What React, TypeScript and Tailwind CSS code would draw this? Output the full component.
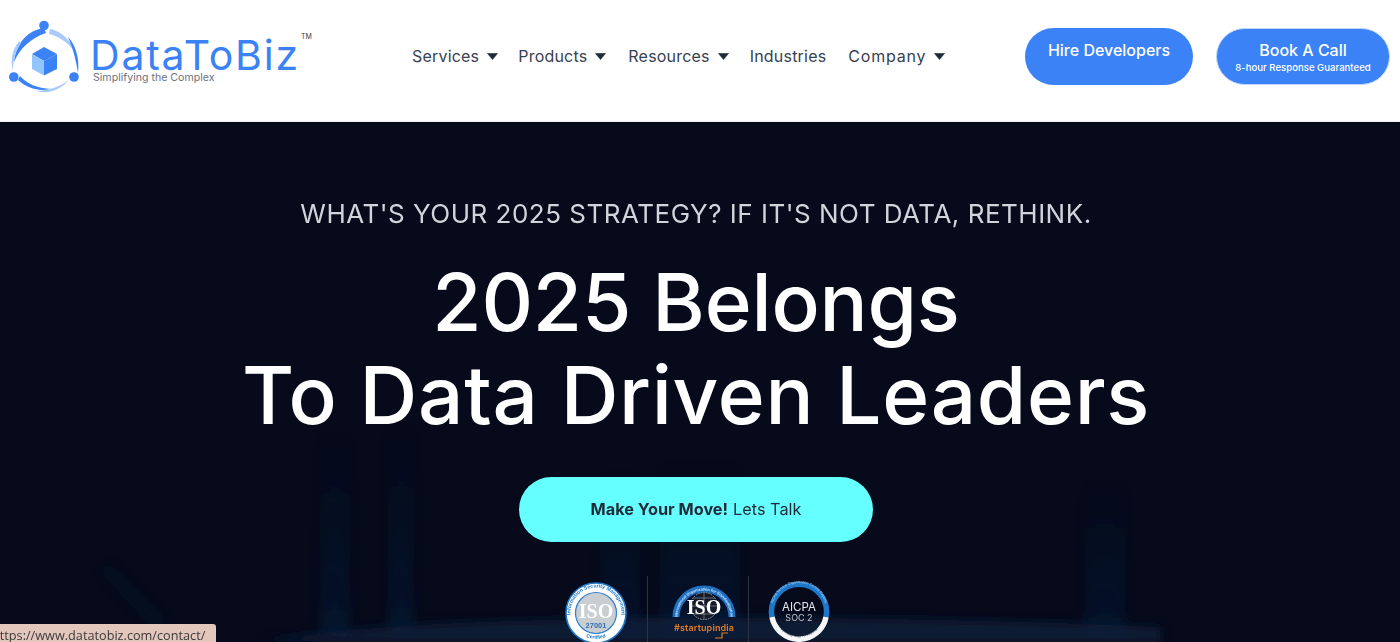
const navItems = [
  { label: "Services", caret: true, cls: "mr-[20px]" },
  { label: "Products", caret: true, cls: "mr-[22px]" },
  { label: "Resources", caret: true, cls: "mr-[21px]" },
  { label: "Industries", caret: false, cls: "mr-[22px]" },
  { label: "Company", caret: true, cls: "tracking-[0.8px]" },
];

function Caret() {
  return (
    <svg width="11" height="7" viewBox="0 0 11 7" className="ml-[8px]">
      <path d="M0.5 0.5 H10.5 L5.5 6.5 Z" fill="#1f2937" stroke="#1f2937" strokeWidth="0.6" strokeLinejoin="round" />
    </svg>
  );
}

function LogoMark() {
  return (
    <svg width="72" height="76" viewBox="0 0 72 76" className="shrink-0">
      <path d="M35 8 C20 10 7 22 5 42 C11 28 22 18 37 13 Z" fill="#3b82f6" />
      <path d="M10 21 C3 30 1 40 4 51 C4 42 6 32 12 23 Z" fill="#a9cbfb" />
      <path d="M41 9 C52 11 62 20 67 33 C60 24 52 17 40 14 Z" fill="#a9cbfb" />
      <path d="M59 17 C66 24 71 38 69 53 C67 40 64 28 59 17 Z" fill="#3b82f6" />
      <path d="M11 56 C18 64 28 68 42 69 C30 72 18 68 9 60 Z" fill="#3b82f6" />
      <path d="M27 71 C40 75 52 69 60 60 C53 65 44 70 27 71 Z" fill="#a9cbfb" />
      <circle cx="35" cy="5.5" r="4.8" fill="#3b82f6" />
      <circle cx="4.8" cy="57" r="4.8" fill="#3b82f6" />
      <circle cx="65" cy="57" r="4.8" fill="#3b82f6" />
      <path d="M35 27 L48 34 L35 41 L23 34 Z" fill="#3b82f6" />
      <path d="M48 34 V49 L35 55.5 V41 Z" fill="#3b82f6" />
      <path d="M23 34 V49 L35 55.5 V41 Z" fill="#93c5fd" />
    </svg>
  );
}

function IsoBadge() {
  return (
    <svg width="62" height="62" viewBox="0 0 62 62">
      <defs>
        <path id="isoTop" d="M8 42 A25.5 25.5 0 1 1 54 42" />
        <path id="isoBottom" d="M6 38 A26 26 0 0 0 56 38" />
      </defs>
      <circle cx="31" cy="31" r="30" fill="#fff" stroke="#1d78c9" strokeWidth="1.6" />
      <circle cx="31" cy="31" r="20.5" fill="#c9ced3" stroke="#2f7fc9" strokeWidth="1.2" />
      <text fontSize="5.2" fontWeight="700" fill="#1d78c9" fontFamily="'Liberation Sans', sans-serif" textAnchor="middle">
        <textPath href="#isoTop" startOffset="50%">Information Security Management</textPath>
      </text>
      <text fontSize="5" fontWeight="700" fill="#1d78c9" fontFamily="'Liberation Sans', sans-serif" textAnchor="middle">
        <textPath href="#isoBottom" startOffset="50%">Certified</textPath>
      </text>
      <text x="31" y="36" fontSize="20" fontWeight="700" fill="#fff" textAnchor="middle" fontFamily="'Liberation Serif', serif">ISO</text>
      <text x="31" y="46" fontSize="7.5" fontWeight="700" fill="#2f6fb5" textAnchor="middle" fontFamily="'Liberation Sans', sans-serif">27001</text>
    </svg>
  );
}

function StartupBadge() {
  return (
    <svg width="66" height="60" viewBox="0 0 66 60">
      <defs>
        <path id="startArc" d="M6.5 36 A26.5 26.5 0 1 1 59.5 36" />
      </defs>
      <path d="M5 36 A28 28 0 1 1 61 36" fill="none" stroke="#1d6fc0" strokeWidth="7" />
      <text fontSize="3.8" fontWeight="600" fill="#d7e8fb" fontFamily="'Liberation Sans', sans-serif" textAnchor="middle">
        <textPath href="#startArc" startOffset="50%">International Organization for Standardization</textPath>
      </text>
      <circle cx="33" cy="25" r="13.5" fill="#141a28" stroke="#9aa1ab" strokeWidth="1" strokeDasharray="1.6 1" />
      <path d="M19.5 25 H46.5 M33 11.5 V38.5 M22 17 H44 M22 33 H44" stroke="#9aa1ab" strokeWidth="0.6" fill="none" />
      <text x="33" y="32.5" fontSize="20" fontWeight="700" fill="#fff" textAnchor="middle" fontFamily="'Liberation Serif', serif">ISO</text>
      <text x="33" y="50" fontSize="9" fontWeight="600" fill="#e07f27" textAnchor="middle" textLength="60" fontFamily="Inter, sans-serif">#startupindia</text>
      <path d="M44 57 H51 V52 H57" fill="none" stroke="#e07f27" strokeWidth="1.2" />
    </svg>
  );
}

function AicpaBadge() {
  return (
    <svg width="62" height="62" viewBox="0 0 62 62">
      <defs>
        <path id="aicpaTop" d="M4.5 37 A27.5 27.5 0 1 1 57.5 37" transform="translate(1 1) scale(0.97)" />
        <path id="aicpaBottom" d="M7 42 A26.5 26.5 0 0 0 55 42" />
      </defs>
      <path d="M4 37 A27.5 27.5 0 1 1 58 37" fill="none" stroke="#1d78c9" strokeWidth="5.5" />
      <path d="M4 37 A27.5 27.5 0 0 0 58 37" fill="none" stroke="#f4f6f8" strokeWidth="5.5" />
      <text fontSize="3.6" fill="#bcdcf8" fontFamily="'Liberation Sans', sans-serif" textAnchor="middle">
        <textPath href="#aicpaTop" startOffset="50%">AICPA Service Organization Control Reports</textPath>
      </text>
      <text fontSize="3.6" fill="#1f2937" fontFamily="'Liberation Sans', sans-serif" textAnchor="middle">
        <textPath href="#aicpaBottom" startOffset="50%">Formerly SAS 70 Reports</textPath>
      </text>
      <text x="31" y="31" fontSize="11.5" fill="#e5e7eb" textAnchor="middle" fontFamily="Inter, sans-serif">AICPA</text>
      <text x="31" y="41" fontSize="9" fill="#c3c8cf" textAnchor="middle" fontFamily="Inter, sans-serif">SOC 2</text>
    </svg>
  );
}

function HeroBackdrop() {
  return (
    <svg className="absolute inset-0 h-full w-full" viewBox="0 0 1400 520" preserveAspectRatio="none">
      <defs>
        <linearGradient id="beam" x1="0" y1="0" x2="0" y2="1">
          <stop offset="0" stopColor="#0e2a55" stopOpacity="0" />
          <stop offset="1" stopColor="#0e2a55" stopOpacity="0.3" />
        </linearGradient>
        <filter id="soft"><feGaussianBlur stdDeviation="5" /></filter>
      </defs>
      <g filter="url(#soft)">
        <rect x="320" y="310" width="30" height="210" fill="url(#beam)" />
        <rect x="388" y="300" width="26" height="220" fill="url(#beam)" />
        <rect x="600" y="350" width="40" height="170" fill="url(#beam)" />
        <rect x="660" y="340" width="80" height="180" fill="url(#beam)" />
        <rect x="1085" y="360" width="40" height="160" fill="url(#beam)" />
        <path d="M110 440 L170 500 L150 505 L100 450 Z" fill="#0d2244" opacity="0.15" />
        <path d="M260 520 C400 492 800 490 1160 505 L1160 520 Z" fill="#0c1c38" opacity="0.9" />
      </g>
    </svg>
  );
}

export default function App() {
  return (
    <div className="relative h-[642px] w-[1400px] overflow-hidden bg-white font-['Inter','Liberation_Sans',sans-serif]">
      <header className="flex h-[122px] items-start border-b border-[#eeeeee] bg-white">
        <div className="ml-[9px] mt-[20px] flex w-[403px] items-start">
          <LogoMark />
          <div className="relative ml-[9px] mt-[12px]">
            <div className="text-[41px] leading-[46px] font-normal tracking-[1.8px] text-[#3b82f6]">DataToBiz</div>
            <div className="mt-[-7px] ml-[3px] text-[10.6px] leading-[14px] text-[#6b7280]">Simplifying the Complex</div>
            <div className="absolute right-[-12px] top-[1px] text-[7px] leading-[8px] text-[#374151]">TM</div>
          </div>
        </div>
        <nav className="mt-[44px] flex h-[24px] w-[613px] items-center text-[16px] tracking-[0.2px] text-[#374151]">
          {navItems.map((n) => (
            <div key={n.label} className={`flex items-center ${n.cls}`}>
              <span>{n.label}</span>
              {n.caret && <Caret />}
            </div>
          ))}
        </nav>
        <a className="mt-[28px] flex h-[57px] w-[168px] justify-center rounded-full bg-[#3b82f6] pt-[10px] text-[16px] leading-[24px] font-medium text-white">
          Hire Developers
        </a>
        <a className="mt-[28px] ml-[23px] flex h-[57px] w-[174px] flex-col items-center rounded-full border border-[#bcd6fc] bg-[#3b82f6] pt-[9px] text-white">
          <span className="text-[16px] leading-[24px] font-medium">Book A Call</span>
          <span className="text-[9.6px] leading-[12px] font-medium">8-hour Response Guaranteed</span>
        </a>
      </header>
      <main className="relative h-[520px] bg-[#060a1a]">
        <HeroBackdrop />
        <div className="relative flex w-[1392px] flex-col items-center">
          <p className="mt-[74px] text-[26px] leading-[36px] tracking-[0.5px] text-[#d1d5db] uppercase">
            What's your 2025 strategy? If it's not data, rethink.
          </p>
          <h1 className="mt-[23px] text-center text-[80px] leading-[93px] font-medium text-white">
            <span className="block tracking-[-0.2px]">2025 Belongs</span>
            <span className="block tracking-[0.7px]">To Data Driven Leaders</span>
          </h1>
          <a className="mt-[36px] flex h-[65px] w-[354px] items-center justify-center rounded-full bg-[#66ffff] text-[16.3px] text-[#1f2937]">
            <b className="font-bold">Make Your Move!</b>
            <span className="ml-[5px]">Lets Talk</span>
          </a>
          <div className="mt-[34px] ml-[3px] flex items-start">
            <div className="mt-[6px] mr-[20px]"><IsoBadge /></div>
            <div className="h-[70px] w-px bg-[#2a3347]" />
            <div className="mt-[5px] ml-[23px] mr-[11px]"><StartupBadge /></div>
            <div className="h-[70px] w-px bg-[#2a3347]" />
            <div className="mt-[4px] ml-[19px]"><AicpaBadge /></div>
          </div>
        </div>
      </main>
      <div className="absolute bottom-0 left-0 h-[18px] w-[216px] overflow-hidden rounded-tr-[3px] bg-[#e3c6bc] text-[12.7px] leading-[22px] whitespace-nowrap text-[#3a3a3a] font-['Open_Sans',sans-serif]">
        <span className="ml-[-8px] inline-block">https://www.datatobiz.com/contact/</span>
      </div>
    </div>
  );
}
